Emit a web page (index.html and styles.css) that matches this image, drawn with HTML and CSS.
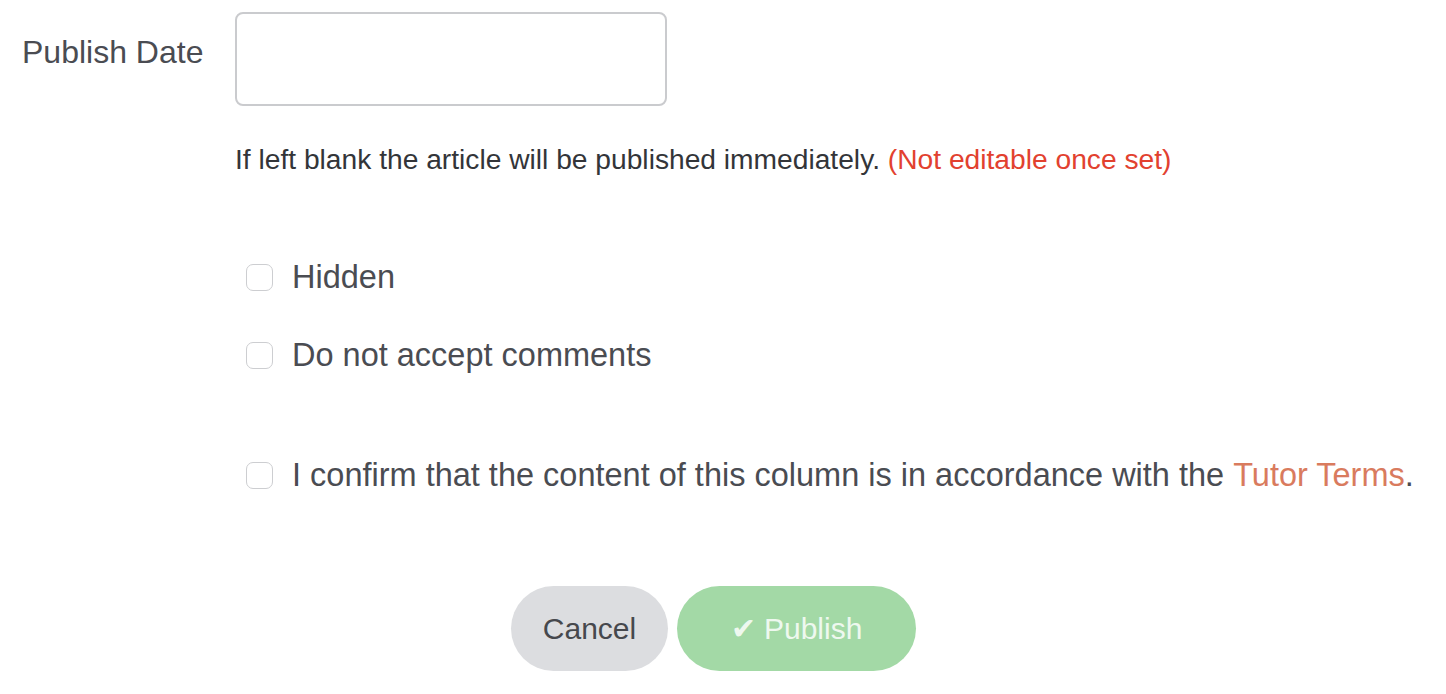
FILE: index.html
```html
<!DOCTYPE html>
<html>
<head>
<meta charset="utf-8">
<link rel="stylesheet" href="styles.css">
</head>
<body>
<form class="form">
  <div class="row">
    <label class="row-label" for="pubdate">Publish Date</label>
    <input class="text-input" id="pubdate" type="text">
  </div>
  <p class="help">If left blank the article will be published immediately. <span class="warn">(Not editable once set)</span></p>
  <div class="checks">
    <label class="check check-first"><span class="box"></span>Hidden</label>
    <label class="check check-second"><span class="box"></span>Do not accept comments</label>
    <label class="check check-third"><span class="box"></span>I confirm that the content of this column is in accordance with the&nbsp;<a class="terms" href="#">Tutor Terms</a>.</label>
  </div>
  <div class="actions">
    <button type="button" class="btn btn-cancel">Cancel</button>
    <button type="button" class="btn btn-publish">✔ Publish</button>
  </div>
</form>
</body>
</html>
```
FILE: styles.css
```css
html, body {
  margin: 0;
  padding: 0;
  background: #ffffff;
}
body {
  font-family: "Liberation Sans", Arial, Helvetica, sans-serif;
  color: #4a4c52;
}
.form {
  padding-top: 12px;
}
.row {
  display: flex;
  align-items: flex-start;
}
.row-label {
  box-sizing: border-box;
  width: 235px;
  padding-left: 22px;
  padding-top: 22px;
  font-size: 32px;
  line-height: 36px;
  color: #4a4c52;
}
.text-input {
  box-sizing: border-box;
  width: 432px;
  height: 94px;
  border: 2px solid #cacbce;
  border-radius: 8px;
  background: #fff;
  margin: 0;
  padding: 0 16px;
  font-size: 28px;
  outline: none;
}
.help {
  margin: 38px 0 0 235px;
  font-size: 28.2px;
  line-height: 30px;
  color: #333539;
}
.warn {
  color: #e2412f;
}
.checks {
  display: flex;
  flex-direction: column;
  margin-left: 246px;
}
.check {
  display: flex;
  align-items: center;
  font-size: 32.5px;
  line-height: 36px;
  color: #4a4c52;
  white-space: nowrap;
}
.check-first { margin-top: 85px; }
.check-second { margin-top: 42px; }
.check-third { margin-top: 84px; }
.box {
  box-sizing: border-box;
  width: 27px;
  height: 27px;
  border: 1.5px solid #cdced1;
  border-radius: 7px;
  background: #fff;
  margin-right: 19px;
  flex: none;
}
.terms {
  color: #d97b5e;
  text-decoration: none;
}
.actions {
  display: flex;
  justify-content: center;
  gap: 9px;
  margin-top: 93px;
  padding-right: 19px;
}
.btn {
  height: 85px;
  border: none;
  border-radius: 43px;
  font-family: "Liberation Sans", Arial, Helvetica, sans-serif;
  font-size: 30px;
  padding: 0;
  cursor: pointer;
}
.btn-cancel {
  width: 157px;
  background: #dcdde0;
  color: #46484d;
}
.btn-publish {
  width: 239px;
  background: #a3d9a6;
  color: #eef8ef;
}
```
